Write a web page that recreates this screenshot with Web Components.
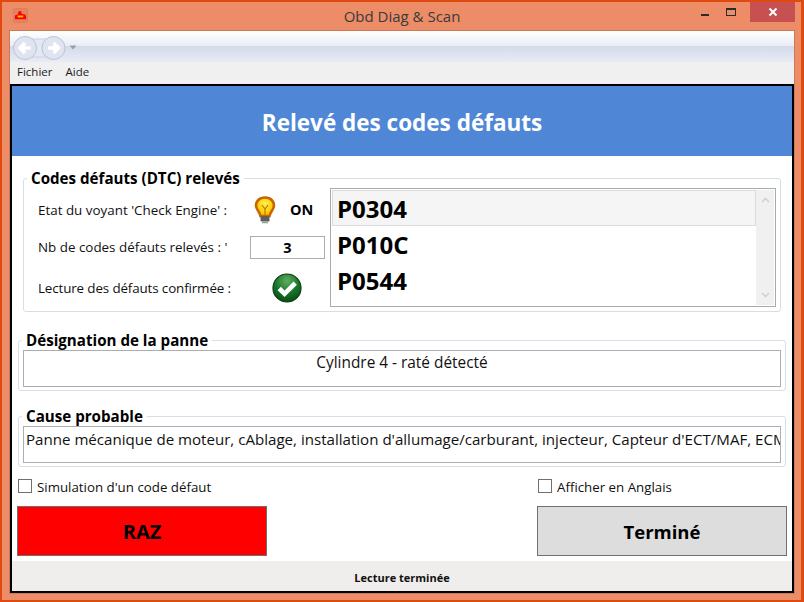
<!DOCTYPE html>
<html lang="fr">
<head>
<meta charset="utf-8">
<title>Obd Diag &amp; Scan</title>
<style>
  html, body { margin: 0; height: 100%; background: #e0490f; }
  body { font-family: "Open Sans", "Noto Sans", sans-serif; overflow: hidden; }
</style>
</head>
<body>
<template id="tpl-window">
  <style>
    :host { display: flex; flex-direction: column; box-sizing: border-box; width: 804px; height: 602px; padding: 2px 3px 2px 2px; }
    .frame { flex: 1; display: flex; flex-direction: column; background: #ec8d68; padding: 0 7px 7px 8px; min-height: 0; }
    .client { flex: 1; display: flex; flex-direction: column; min-height: 0; outline: 1px solid #c97a5c; }
    .page { flex: 1; display: flex; flex-direction: column; min-height: 0; border: 2px solid #000; background: #fff; }
  </style>
  <div class="frame">
    <slot name="title"></slot>
    <div class="client">
      <slot name="chrome"></slot>
      <div class="page"><slot></slot></div>
    </div>
  </div>
</template>

<template id="tpl-title">
  <style>
    :host { display: grid; grid-template-columns: 1fr auto 1fr; height: 29px; color: #3a3a3a; font-size: 15px; }
    .icon { padding: 5px 0 0 3px; }
    .text { padding-top: 4px; line-height: 20px; }
    .btns { display: flex; justify-content: flex-end; margin-right: -1px; height: 20px; }
    .b { width: 26px; display: flex; align-items: center; justify-content: center; }
    .x { width: 45px; background: #c75050; margin-left: 6px; }
  </style>
  <div class="icon">
    <svg width="15" height="15" viewBox="0 0 16 16">
      <rect x="0.5" y="0.5" width="15" height="15" rx="2" fill="#e5835f" stroke="#d97f60"/>
      <path d="M6 3.5 L9 3.5 L9 6 L13 7 L14 9 L14 12 L2 12 L2 8 L5 7 Z" fill="#f00"/>
      <rect x="5" y="8" width="6" height="2" fill="#ffc000"/>
    </svg>
  </div>
  <div class="text"><slot></slot></div>
  <div class="btns">
    <div class="b"><svg width="10" height="10"><rect x="1" y="7" width="8" height="2" fill="#2b2b2b"/></svg></div>
    <div class="b"><svg width="12" height="10"><rect x="1.5" y="1.5" width="9" height="7" fill="none" stroke="#2b2b2b"/><rect x="1" y="1" width="10" height="2" fill="#2b2b2b"/></svg></div>
    <div class="b x"><svg width="10" height="10"><path d="M1.5 1.5 L8.5 8.5 M8.5 1.5 L1.5 8.5" stroke="#fff" stroke-width="2"/></svg></div>
  </div>
</template>

<template id="tpl-nav">
  <style>
    :host { display: flex; align-items: center; gap: 3px; box-sizing: border-box; height: 31px; padding: 2px 0 0 3px;
      background: linear-gradient(#fff 0, #e9edf4 15px, #d4daea 15px, #e9ebf5 31px); }
    svg { display: block; }
  </style>
  <svg width="53" height="24" viewBox="0 0 53 24">
    <rect x="12" y="3" width="29" height="18" fill="#e4e8f2" stroke="#cbd2e4"/>
    <circle cx="12" cy="12" r="11.5" fill="#dfe4ef" stroke="#b9c3dc"/>
    <circle cx="40.5" cy="12" r="11.5" fill="#dfe4ef" stroke="#b9c3dc"/>
    <path d="M17.5 12 H8 M12 7 L7 12 L12 17" fill="none" stroke="#fff" stroke-width="3.4"/>
    <path d="M35 12 H44.5 M40.5 7 L45.5 12 L40.5 17" fill="none" stroke="#fff" stroke-width="3.4"/>
  </svg>
  <svg width="8" height="5" viewBox="0 0 8 5"><path d="M0.5 0.5 H7.5 L4 4.5 Z" fill="#9a9fab"/></svg>
</template>

<template id="tpl-menu">
  <style>
    :host { display: flex; gap: 13px; box-sizing: border-box; height: 22px; padding: 0 0 0 7px; background: #f0f0f0;
      font-size: 11.5px; line-height: 20px; color: #1a1a1a; }
  </style>
  <slot></slot>
</template>

<template id="tpl-header">
  <style>
    :host { display: flex; align-items: center; justify-content: center; box-sizing: border-box; height: 70px; padding-top: 2px; flex: none; background: #4f87d6;
      color: #fff; font-size: 22.5px; font-weight: 700; }
  </style>
  <slot></slot>
</template>

<template id="tpl-group">
  <style>
    :host { display: block; flex: none; }
    fieldset { margin: 0; padding: 0 4px 3px; height: var(--h, 61px); box-sizing: border-box; border: 1px solid #d5dfe5; border-radius: 3px; min-width: 0; }
    legend { padding: 0 4px; margin-left: -1px; font-size: 15.15px; font-weight: 700; line-height: 20px; color: #000; }
  </style>
  <fieldset>
    <legend><slot name="legend"></slot></legend>
    <slot></slot>
  </fieldset>
</template>

<template id="tpl-textbox">
  <style>
    :host { display: block; box-sizing: border-box; height: 37px; border: 1px solid #abadb3; font-size: 15.1px; line-height: 20px;
      padding: 2px 0 0 2px; white-space: nowrap; overflow: hidden; color: #111; }
    :host([center]) { text-align: center; padding: 2px 0 0; font-size: 15.4px; }
  </style>
  <slot></slot>
</template>

<template id="tpl-list">
  <style>
    :host { display: flex; flex: none; box-sizing: border-box; width: 446px; height: 119px; border: 1px solid #aaa; padding: 1px;
      font-size: 24px; font-weight: 700; line-height: 38px; color: #000; }
    .rows { flex: 1; min-width: 0; }
    .bar { flex: none; width: 18px; background: #f0f0f0; display: flex; flex-direction: column; justify-content: space-between; align-items: center; padding: 7px 0; }
    svg { display: block; }
  </style>
  <div class="rows"><slot></slot></div>
  <div class="bar">
    <svg width="9" height="6"><path d="M1 5 L4.5 1.5 L8 5" fill="none" stroke="#cdcdcd" stroke-width="1.3"/></svg>
    <svg width="9" height="6"><path d="M1 1 L4.5 4.5 L8 1" fill="none" stroke="#cdcdcd" stroke-width="1.3"/></svg>
  </div>
</template>

<template id="tpl-item">
  <style>
    :host { display: block; box-sizing: border-box; height: 36px; padding-left: 5px; }
    :host([selected]) { background: #f5f5f5; border: 1px solid #dcdcdc; padding-left: 4px; line-height: 36px; }
  </style>
  <slot></slot>
</template>

<template id="tpl-check">
  <style>
    :host { display: flex; align-items: center; gap: 5px; height: 16px; font-size: 13.3px; color: #111; }
    i { display: block; box-sizing: border-box; width: 14px; height: 14px; border: 1px solid #707070; background: #fff; }
    span { padding-top: 2px; }
  </style>
  <i></i><span><slot></slot></span>
</template>

<template id="tpl-button">
  <style>
    :host { display: flex; align-items: center; justify-content: center; box-sizing: border-box; width: 250px; height: 50px;
      border: 1px solid #707070; background: #ddd; font-size: 18.5px; font-weight: 700; color: #000; }
    :host([danger]) { background: #f00; font-size: 20px; }
  </style>
  <slot></slot>
</template>

<template id="tpl-status">
  <style>
    :host { display: flex; align-items: center; justify-content: center; flex: 1; background: #f0eded; font-size: 11px; font-weight: 700; color: #111; padding-top: 3px; }
  </style>
  <slot></slot>
</template>

<template id="tpl-scan">
  <style>
    :host { display: flex; flex-direction: column; flex: 1; min-height: 0; font-size: 13.4px; color: #111; }
    .g1 { margin: 12px 11px 0 11px; --h: 144px; }
    .dtc { display: flex; gap: 5px; align-items: flex-start; }
    .info { flex: 1; min-width: 0; display: grid; grid-template-columns: 1fr 75px; grid-template-rows: 37px 38px 44px; align-items: center; padding: 0 0 0 10px; margin-top: 3px; }
    .on { display: flex; align-items: center; gap: 14px; margin-left: 4px; font-size: 14.5px; font-weight: 700; color: #000; }
    .ok { margin-left: 22px; }
    .tight { letter-spacing: -0.13px; }
    .num { box-sizing: border-box; width: 75px; height: 23px; border: 1px solid #abadb3; text-align: center; font-size: 14.5px; font-weight: 700; line-height: 21px; color: #000; }
    .g2 { margin: 18px 6px 0; }
    .g3 { margin: 15px 6px 0; }
    .checks { display: flex; justify-content: space-between; padding: 0 5px 0 6px; margin-top: 11px; }
    .checks check-box { width: 249px; }
    .actions { display: flex; justify-content: space-between; padding: 0 5px; margin-top: 12px; }
    .foot { flex: 1; display: flex; margin-top: 5px; }
    svg { display: block; }
  </style>
  <group-box class="g1">
    <span slot="legend">Codes défauts (DTC) relevés</span>
    <div class="dtc">
      <div class="info">
        <span>Etat du voyant 'Check Engine' :</span>
        <div class="on">
          <svg width="22" height="28" viewBox="0 0 22 28">
            <defs><radialGradient id="b" cx="50%" cy="35%" r="55%"><stop offset="0" stop-color="#fff24a"/><stop offset="1" stop-color="#ffc400"/></radialGradient></defs>
            <path d="M11 1.5 C5 1.5 2 5.5 2 9.5 C2 14 6 15.5 6.5 20 H15.5 C16 15.5 20 14 20 9.5 C20 5.5 17 1.5 11 1.5 Z" fill="url(#b)" stroke="#c96400" stroke-width="2.6"/>
            <path d="M8 9 L11 13 L14 9 M11 13 V19" fill="none" stroke="#c07a00" stroke-width="1.2"/>
            <rect x="6.5" y="20" width="9" height="5.5" rx="1" fill="#5e5e5e"/>
            <rect x="8" y="25.5" width="6" height="1.8" fill="#a0a0a0"/>
          </svg>
          <span>ON</span>
        </div>
        <span>Nb de codes défauts relevés : '</span>
        <div class="num">3</div>
        <span class="tight">Lecture des défauts confirmée :</span>
        <div class="ok">
          <svg width="30" height="30" viewBox="0 0 31 31">
            <defs><radialGradient id="g" cx="50%" cy="25%" r="80%"><stop offset="0" stop-color="#5fae62"/><stop offset=".55" stop-color="#17732a"/><stop offset="1" stop-color="#06470f"/></radialGradient></defs>
            <circle cx="15.5" cy="15.5" r="14.5" fill="url(#g)" stroke="#0b3d14" stroke-width="1.2"/>
            <path d="M7.5 16 L13 21.5 L24 10.5" fill="none" stroke="#fff" stroke-width="4.8"/>
          </svg>
        </div>
      </div>
      <dtc-list>
        <dtc-item selected>P0304</dtc-item>
        <dtc-item>P010C</dtc-item>
        <dtc-item>P0544</dtc-item>
      </dtc-list>
    </div>
  </group-box>
  <group-box class="g2">
    <span slot="legend">Désignation de la panne</span>
    <text-box center>Cylindre 4 - raté détecté</text-box>
  </group-box>
  <group-box class="g3">
    <span slot="legend">Cause probable</span>
    <text-box>Panne mécanique de moteur, cAblage, installation d'allumage/carburant, injecteur, Capteur d'ECT/MAF, ECM</text-box>
  </group-box>
  <div class="checks">
    <check-box>Simulation d'un code défaut</check-box>
    <check-box>Afficher en Anglais</check-box>
  </div>
  <div class="actions">
    <action-button danger>RAZ</action-button>
    <action-button>Terminé</action-button>
  </div>
  <div class="foot"><status-bar>Lecture terminée</status-bar></div>
</template>

<app-window>
  <title-bar slot="title">Obd Diag &amp; Scan</title-bar>
  <div slot="chrome">
    <nav-bar></nav-bar>
    <menu-bar><span>Fichier</span><span>Aide</span></menu-bar>
  </div>
  <page-header>Relevé des codes défauts</page-header>
  <scan-page></scan-page>
</app-window>

<script>
// every element is just a template stamped into an open shadow root
function register(tag, tplId) {
  customElements.define(tag, class extends HTMLElement {
    connectedCallback() {
      if (this.shadowRoot) { return; }
      this.attachShadow({ mode: "open" });
      this.shadowRoot.appendChild(document.getElementById(tplId).content.cloneNode(true));
    }
  });
}

register("app-window", "tpl-window");
register("title-bar", "tpl-title");
register("nav-bar", "tpl-nav");
register("menu-bar", "tpl-menu");
register("page-header", "tpl-header");
register("group-box", "tpl-group");
register("text-box", "tpl-textbox");
register("dtc-list", "tpl-list");
register("dtc-item", "tpl-item");
register("check-box", "tpl-check");
register("action-button", "tpl-button");
register("status-bar", "tpl-status");
register("scan-page", "tpl-scan");
</script>
</body>
</html>
